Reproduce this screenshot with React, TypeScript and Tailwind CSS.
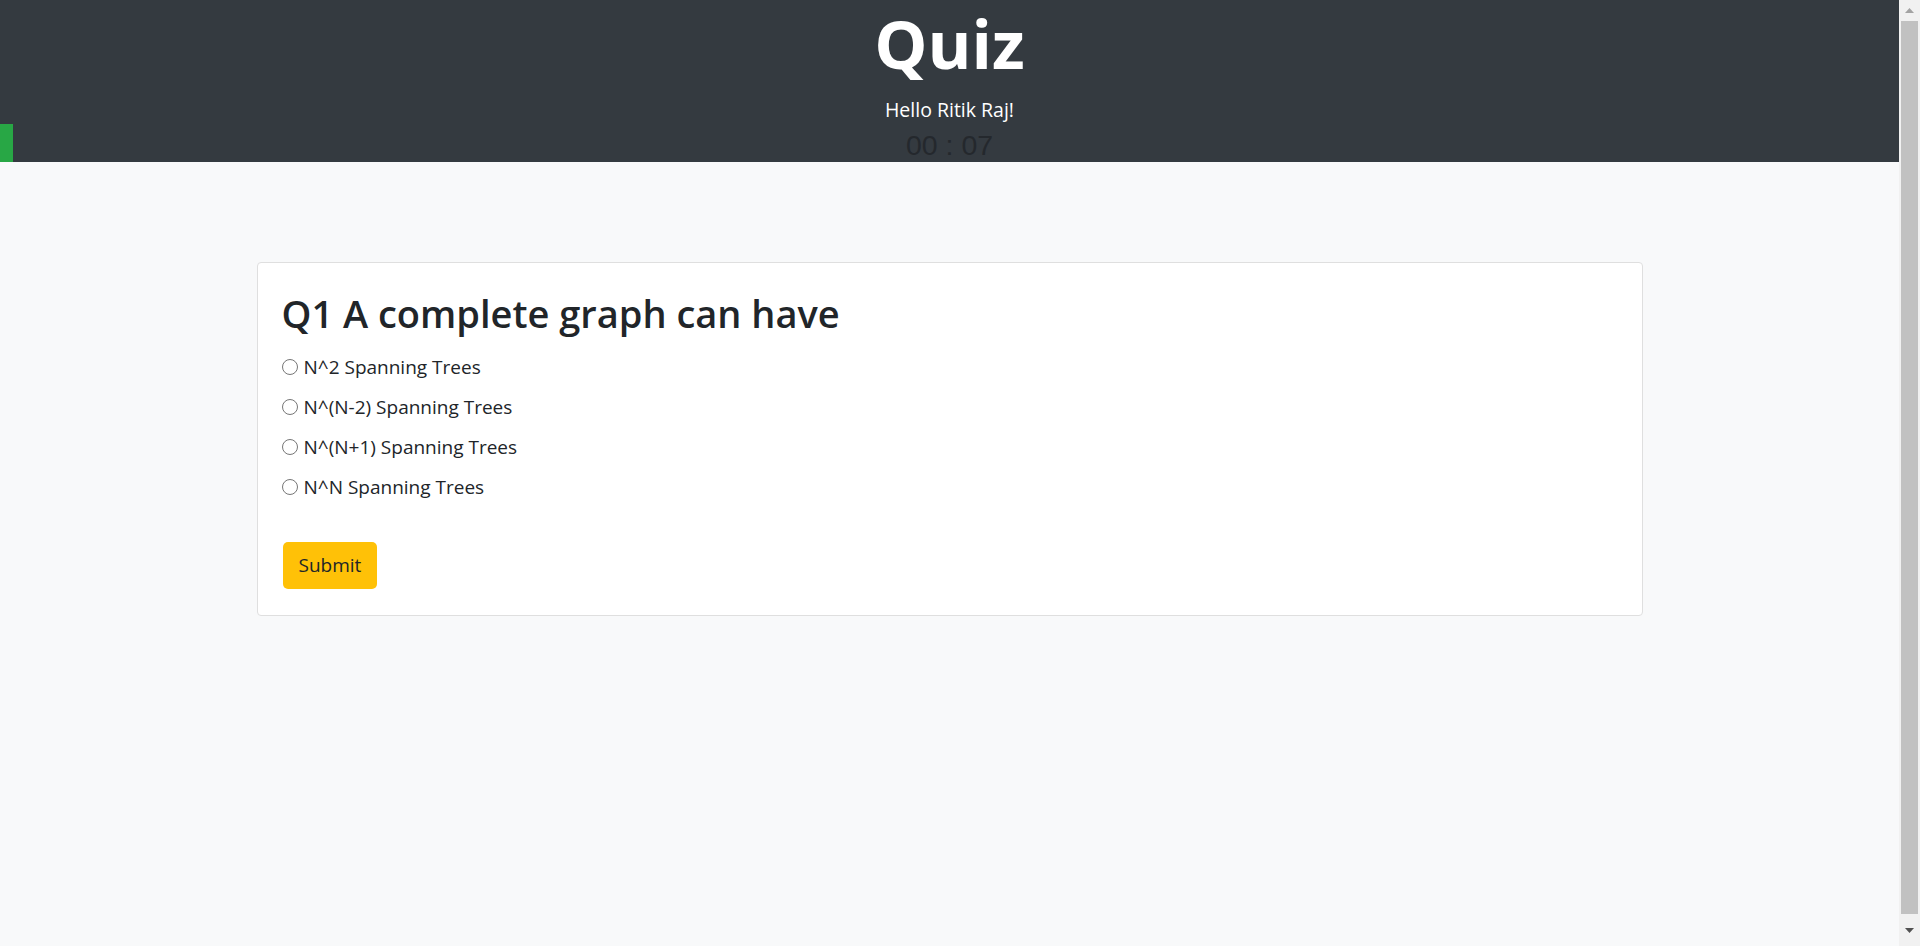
import React, { useState } from 'react';

const options = [
  'N^2 Spanning Trees',
  'N^(N-2) Spanning Trees',
  'N^(N+1) Spanning Trees',
  'N^N Spanning Trees',
];

function Scrollbar() {
  return (
    <div className="w-[21px] h-full bg-[#f1f1f1] flex flex-col items-center">
      <div className="h-[21px] flex items-center justify-center">
        <svg width="9" height="5" viewBox="0 0 9 5">
          <path d="M0 5 L4.5 0 L9 5 Z" fill="#a3a3a3" />
        </svg>
      </div>
      <div className="w-[17px] flex-1 bg-[#c1c1c1]" />
      <div className="h-[32px] flex items-center justify-center">
        <svg width="9" height="5" viewBox="0 0 9 5">
          <path d="M0 0 L9 0 L4.5 5 Z" fill="#505050" />
        </svg>
      </div>
    </div>
  );
}

export default function App() {
  const [picked, setPicked] = useState<number | null>(null);

  return (
    <div className="flex h-screen overflow-hidden text-[#212529] font-['Open_Sans',sans-serif]">
      <div className="flex-1 bg-[#f8f9fa]">
        <header className="relative h-[162px] bg-[#343a40] flex flex-col items-center overflow-hidden">
          <h1 className="text-[67px] leading-[86px] font-bold text-white">Quiz</h1>
          <p className="mt-[10px] text-[19.5px] leading-[27px] text-white">Hello Ritik Raj!</p>
          <div className="mt-[5px] text-[28.5px] leading-[34px] text-[#24282d] font-['Liberation_Sans',sans-serif]">
            00 : 07
          </div>
          <div className="absolute left-0 bottom-0 w-[13px] h-[38px] bg-[#28a745]" />
        </header>

        <main className="pt-[100px]">
          <div className="mx-auto w-[1386px] bg-white border border-[#dfdfdf] rounded-[4px] px-[25px] pt-5 pb-[26px]">
            <h2 className="text-[38px] leading-[48px] font-semibold -ml-[1px] mt-[6px] mb-[10px]">
              Q1 A complete graph can have
            </h2>
            <div className="flex flex-col">
              {options.map((opt, i) => (
                <label key={i} className="h-10 flex items-center gap-[6px] text-[19px] cursor-pointer">
                  <input
                    type="radio"
                    name="q1"
                    className="appearance-none m-0 -ml-px w-[16px] h-[16px] shrink-0 rounded-full border border-[#767676] bg-white checked:border-[#0075ff] checked:bg-[#0075ff] checked:shadow-[inset_0_0_0_3px_white]"
                    checked={picked === i}
                    onChange={() => setPicked(i)}
                  />
                  <span>{opt}</span>
                </label>
              ))}
            </div>
            <button className="mt-[35px] h-[47px] px-4 rounded-[5px] bg-[#ffc107] text-[19px] text-[#212529]">
              Submit
            </button>
          </div>
        </main>
      </div>
      <Scrollbar />
    </div>
  );
}
